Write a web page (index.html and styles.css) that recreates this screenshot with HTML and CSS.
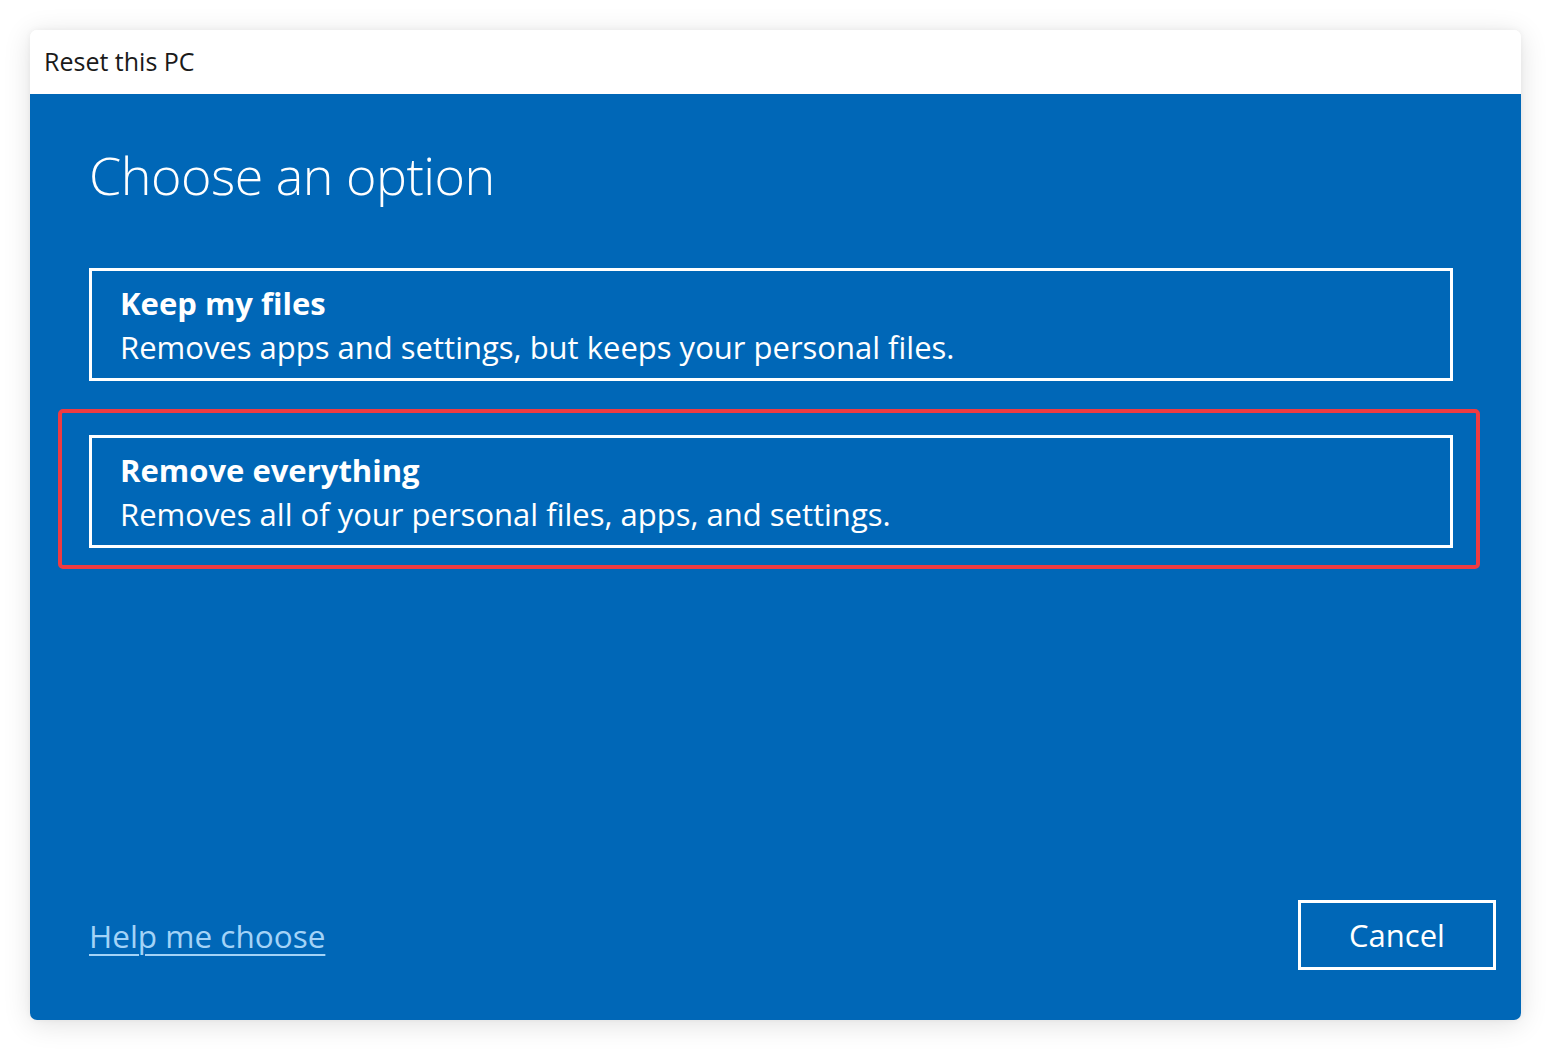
FILE: index.html
```html
<!DOCTYPE html>
<html lang="en">
<head>
<meta charset="utf-8">
<title>Reset this PC</title>
<link rel="stylesheet" href="styles.css">
</head>
<body>
<div class="window">
  <div class="titlebar">Reset this PC</div>
  <div class="content">
    <h1 class="heading">Choose an option</h1>
    <div class="options">
      <div class="option-wrap">
        <div class="option">
          <div class="option-title">Keep my files</div>
          <div class="option-desc">Removes apps and settings, but keeps your personal files.</div>
        </div>
      </div>
      <div class="option-wrap highlight">
        <div class="option">
          <div class="option-title">Remove everything</div>
          <div class="option-desc">Removes all of your personal files, apps, and settings.</div>
        </div>
      </div>
    </div>
    <div class="footer">
      <a class="help" href="#">Help me choose</a>
      <button class="cancel">Cancel</button>
    </div>
  </div>
</div>
</body>
</html>
```

FILE: styles.css
```css
html, body {
  margin: 0;
  padding: 0;
  background: #ffffff;
}
body {
  width: 1550px;
  height: 1050px;
  padding: 30px 29px 30px 30px;
  box-sizing: border-box;
  font-family: "Open Sans", "Noto Sans", sans-serif;
}
.window {
  width: 1491px;
  height: 990px;
  border-radius: 7px;
  box-shadow: 0 4px 28px rgba(0, 0, 0, 0.12), 0 0 6px rgba(0, 0, 0, 0.05);
  display: flex;
  flex-direction: column;
  overflow: hidden;
}
.titlebar {
  height: 64px;
  flex: none;
  background: #ffffff;
  color: #1a1a1a;
  font-size: 25px;
  line-height: 62px;
  padding-left: 14px;
}
.content {
  flex: 1;
  background: #0067b7;
  display: flex;
  flex-direction: column;
  padding: 0 25px 0 59px;
}
.heading {
  margin: 46px 0 0 0;
  font-weight: 300;
  font-size: 52px;
  line-height: 70px;
  color: #ffffff;
  letter-spacing: -0.5px;
}
.options {
  margin-top: 58px;
  display: flex;
  flex-direction: column;
  gap: 7px;
  margin-left: -31px;
  margin-right: 16px;
}
.option-wrap {
  padding: 22px 23px 17px 27px;
  border: 4px solid transparent;
  border-radius: 5px;
}
.option-wrap:first-child {
  margin-top: -26px;
}
.option-wrap.highlight {
  border-color: #ee3b42;
}
.option {
  border: 3px solid #ffffff;
  height: 113px;
  box-sizing: border-box;
  padding: 12px 0 0 28px;
  color: #ffffff;
}
.option-title {
  font-weight: 700;
  font-size: 31px;
  line-height: 40px;
}
.option-desc {
  font-size: 31px;
  line-height: 48px;
}
.footer {
  margin-top: auto;
  margin-bottom: 50px;
  display: flex;
  justify-content: space-between;
  align-items: center;
}
.help {
  color: #a3d3f7;
  font-size: 31.5px;
  text-decoration: underline;
  text-underline-offset: 6px;
  text-decoration-thickness: 2px;
}
.cancel {
  width: 198px;
  height: 70px;
  background: transparent;
  border: 3px solid #ffffff;
  color: #ffffff;
  font-family: "Open Sans", "Noto Sans", sans-serif;
  font-size: 31px;
  padding: 0;
  cursor: pointer;
}
```
